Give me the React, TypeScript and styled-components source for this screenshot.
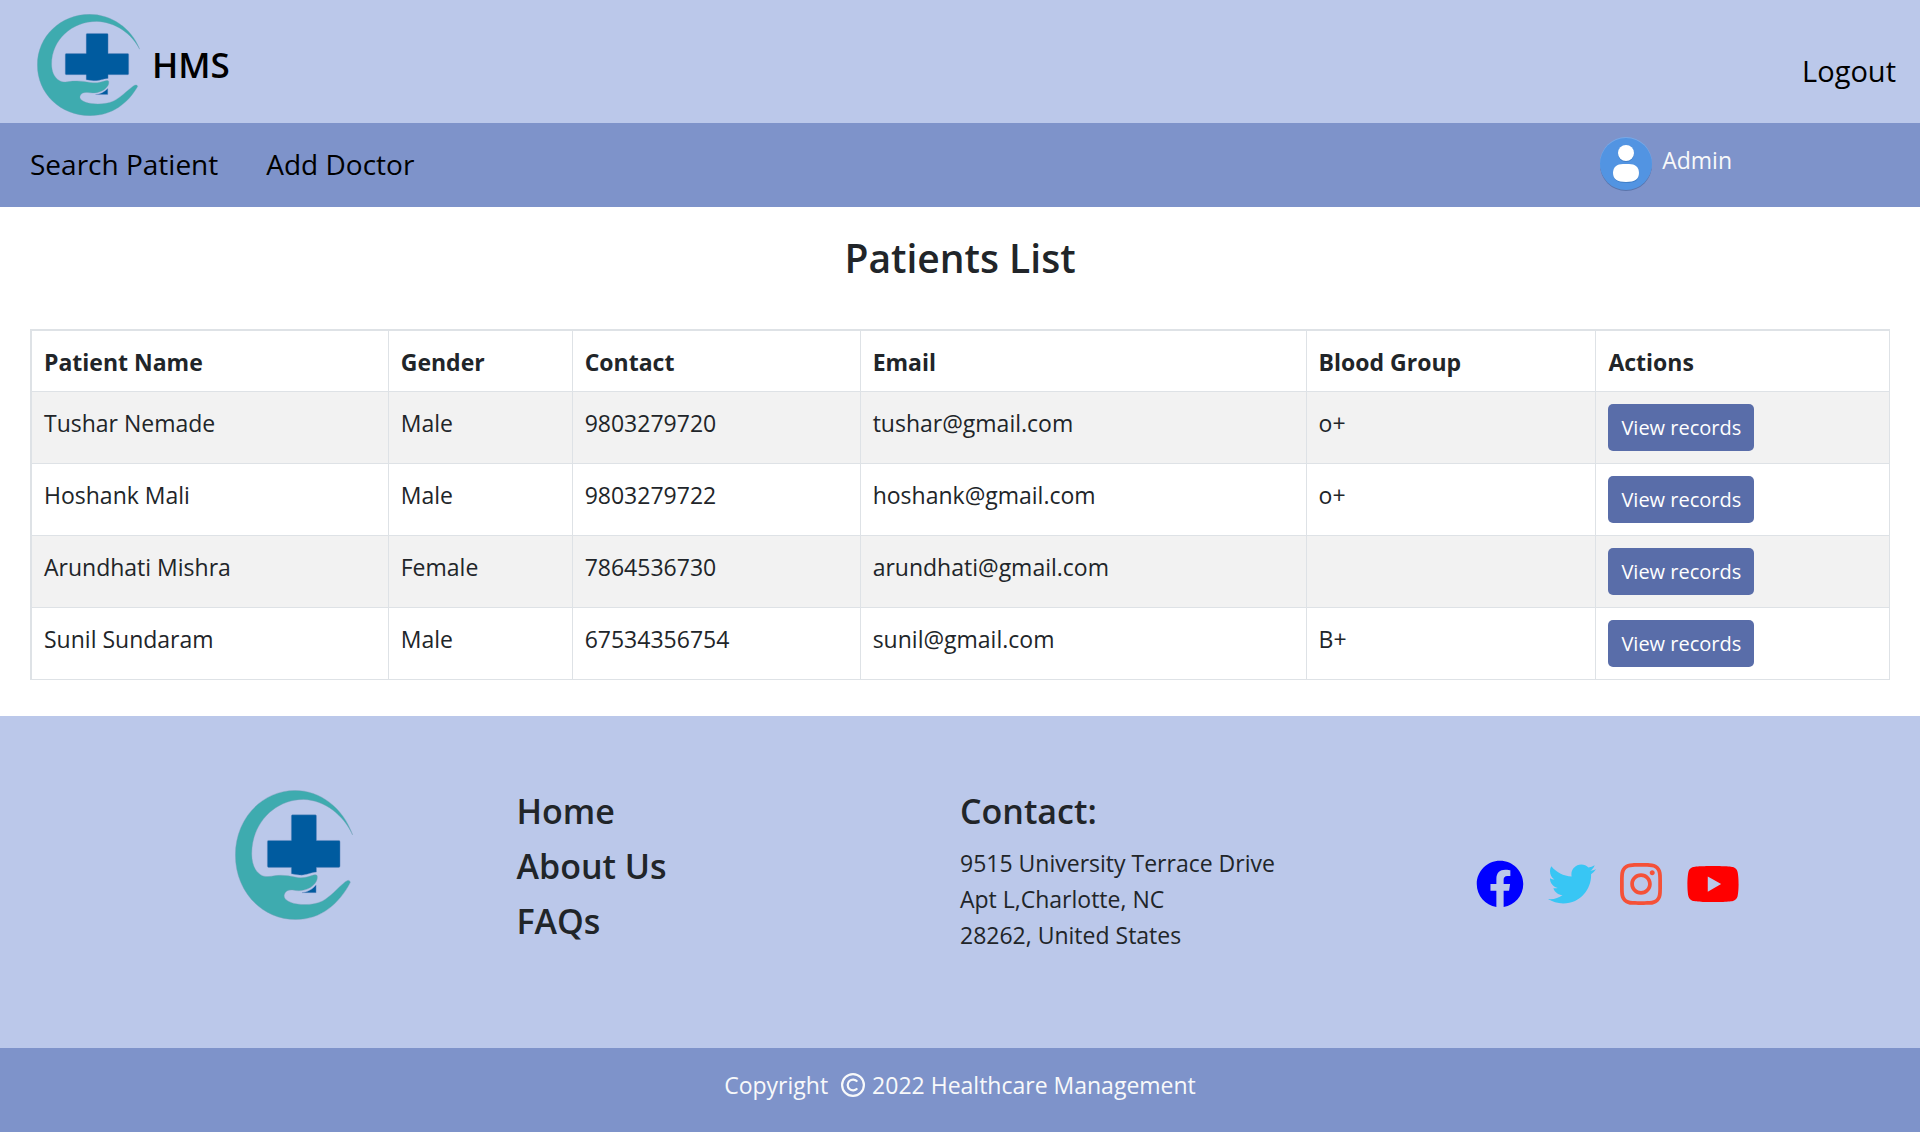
import React from "react";
import styled, { createGlobalStyle } from "styled-components";
import { FaFacebook, FaTwitter, FaInstagram, FaYoutube } from "react-icons/fa";

const GlobalStyle = createGlobalStyle`
  *, *::before, *::after { box-sizing: border-box; }
  body {
    margin: 0;
    background: #fff;
    color: #212529;
    font-family: "Segoe UI", "Open Sans", "Noto Sans", sans-serif;
    font-size: 23px;
    line-height: 36px;
  }
`;

const Header = styled.header`
  display: flex;
  justify-content: space-between;
  align-items: center;
  padding: 14px 24px 7px 37px;
  background: #bbc8ea;
`;

const Brand = styled.a`
  display: flex;
  align-items: center;
  gap: 12px;
  color: #000;
  font-size: 35px;
  font-weight: 600;
  text-decoration: none;
`;

const NavLink = styled.a`
  color: #000;
  font-size: 28px;
  line-height: 44px;
  text-decoration: none;
`;

const LogoutLink = styled(NavLink)`
  padding-top: 12px;
  font-size: 29px;
`;

const NavBar = styled.nav`
  display: flex;
  align-items: center;
  gap: 48px;
  height: 84px;
  padding: 0 188px 2px 30px;
  background: #7e93ca;
`;

const UserInfo = styled.div`
  display: flex;
  align-items: center;
  gap: 9px;
  margin-left: auto;
  color: #f8f9fa;
`;

const UserName = styled.span`
  padding-bottom: 8px;
`;

const Main = styled.main`
  padding: 24px 30px 36px;
`;

const Title = styled.h1`
  margin: 0 0 44px;
  font-size: 39px;
  line-height: 54px;
  font-weight: 600;
  text-align: center;
`;

const Table = styled.table`
  width: 100%;
  table-layout: fixed;
  border-spacing: 0;
  border-top: 2px solid #dee2e6;
  border-left: 2px solid #dee2e6;

  th,
  td {
    padding: 13px 12px 11px;
    border-right: 1px solid #dee2e6;
    border-bottom: 1px solid #dee2e6;
    text-align: left;
    vertical-align: top;
  }
  td:last-child { padding: 12px; }
  th { font-weight: 700; }
  tbody tr:nth-child(odd) { background: #f2f2f2; }
`;

const Col = styled.col<{ $width: string }>`
  width: ${(p) => p.$width};
`;

const RecordsButton = styled.button`
  display: block;
  height: 47px;
  padding: 0 13px;
  border: 0;
  border-radius: 5px;
  background: #596da9;
  color: #fff;
  font-family: inherit;
  font-size: 20px;
  white-space: nowrap;
  cursor: pointer;
`;

const Footer = styled.footer`
  background: #bbc8ea;
`;

const FooterGrid = styled.div`
  display: grid;
  grid-template-columns: repeat(4, 1fr);
  padding: 74px 73px 95px;
`;

const LogoCell = styled.div`
  display: flex;
  justify-content: center;
  padding-right: 2px;
`;

const LinkList = styled.ul`
  display: flex;
  flex-direction: column;
  gap: 12px;
  margin: 0;
  padding: 0;
  list-style: none;
`;

const FooterLink = styled.a`
  display: block;
  color: inherit;
  font-size: 34px;
  line-height: 43px;
  font-weight: 600;
  text-decoration: none;
`;

const ContactHeading = styled.h2`
  margin: 0 0 12px;
  font-size: 34px;
  line-height: 43px;
  font-weight: 600;
`;

const Address = styled.address`
  font-style: normal;
`;

const Socials = styled.div`
  display: flex;
  justify-content: center;
  align-items: center;
  gap: 24px;
  padding-right: 34px;
  padding-top: 24px;
`;

const SocialLink = styled.a<{ $color: string; $width: number }>`
  display: block;
  height: 48px;
  color: ${(p) => p.$color};

  svg {
    display: block;
    width: ${(p) => p.$width}px;
    height: 48px;
  }
`;

const CopyrightBar = styled.div`
  display: flex;
  justify-content: center;
  align-items: center;
  height: 84px;
  padding-bottom: 10px;
  background: #7e93ca;
  color: #f8f9fa;

  svg { margin: 0 7px 0 13px; }
`;

function Logo({ width, height }: { width: number; height: number }) {
  return (
    <svg width={width} height={height} viewBox="110 41 310 304" preserveAspectRatio="none" aria-hidden="true">
      <path
        d="M261 99H321Q324 99 324 102V159H383Q386 159 386 162V219Q386 222 383 222H324V233C306 234 298 241 280 240Q268 239 258 237V222H198Q195 222 195 219V162Q195 159 198 159H258V102Q258 99 261 99Z M286 281C300 280 314 273 323 263V281Z"
        fill="#005b9f"
        stroke="#6f8fc4"
        strokeWidth="1"
      />
      <path
        d="M419 146C394 82 333 42 268 42C181 42 111 108 111 193C111 278 180 344 270 344C336 344 384 307 413 257C411 250 405 252 399 256C379 271 360 291 339 301C316 311 278 311 257 304C242 299 237 292 240 285C243 276 252 274 262 275C274 277 289 278 304 271C317 265 328 254 326 242C325 239 321 239 316 240C299 245 287 248 271 245C253 242 236 239 217 241C203 243 189 246 177 239C161 230 154 211 154 190C154 118 215 63 290 63C346 65 395 99 419 146Z"
        fill="#3eabaf"
        stroke="#7aa0b8"
        strokeWidth="1"
      />
    </svg>
  );
}

function Avatar() {
  return (
    <svg width="54" height="56" viewBox="0 0 54 56" aria-hidden="true">
      <circle cx="27" cy="29" r="26" fill="#5a74ab" />
      <circle cx="27" cy="27" r="26" fill="#77a9e8" />
      <circle cx="27" cy="28" r="26" fill="#5294e2" />
      <g fill="#3f7fc9">
        <circle cx="27" cy="18" r="8" />
        <path d="M14 38C14 31 18 29 27 29S40 31 40 38S35 47 27 47S14 44 14 38Z" />
      </g>
      <g fill="#fff">
        <circle cx="27" cy="17" r="8" />
        <path d="M14 37C14 31 18 28 24 28H30C36 28 40 31 40 37C40 43 36 46 27 46S14 43 14 37Z" />
      </g>
    </svg>
  );
}

function CopyrightIcon() {
  return (
    <svg width="24" height="24" viewBox="0 0 24 24" fill="none" stroke="currentColor" aria-hidden="true">
      <circle cx="12" cy="12" r="10.9" strokeWidth="2.2" />
      <path d="M16.3 8.6A5.4 5.4 0 1 0 16.3 15.4" strokeWidth="2.2" />
    </svg>
  );
}

const columns = [
  { label: "Patient Name", width: "19.2%" },
  { label: "Gender", width: "9.9%" },
  { label: "Contact", width: "15.5%" },
  { label: "Email", width: "24%" },
  { label: "Blood Group", width: "15.6%" },
  { label: "Actions", width: "15.8%" },
];

const patients = [
  { name: "Tushar Nemade", gender: "Male", contact: "9803279720", email: "tushar@gmail.com", blood: "o+" },
  { name: "Hoshank Mali", gender: "Male", contact: "9803279722", email: "hoshank@gmail.com", blood: "o+" },
  { name: "Arundhati Mishra", gender: "Female", contact: "7864536730", email: "arundhati@gmail.com", blood: "" },
  { name: "Sunil Sundaram", gender: "Male", contact: "67534356754", email: "sunil@gmail.com", blood: "B+" },
];

const socials = [
  { label: "Facebook", color: "#0000ff", width: 48, Icon: FaFacebook },
  { label: "Twitter", color: "#38c6f4", width: 48, Icon: FaTwitter },
  { label: "Instagram", color: "#f55138", width: 42, Icon: FaInstagram },
  { label: "YouTube", color: "#ff0000", width: 54, Icon: FaYoutube },
];

export default function App() {
  return (
    <>
      <GlobalStyle />
      <Header>
        <Brand href="#">
          <Logo width={103} height={102} />
          HMS
        </Brand>
        <LogoutLink href="#">Logout</LogoutLink>
      </Header>
      <NavBar>
        <NavLink href="#">Search Patient</NavLink>
        <NavLink href="#">Add Doctor</NavLink>
        <UserInfo>
          <Avatar />
          <UserName>Admin</UserName>
        </UserInfo>
      </NavBar>
      <Main>
        <Title>Patients List</Title>
        <Table>
          <colgroup>
            {columns.map((c) => (
              <Col key={c.label} $width={c.width} />
            ))}
          </colgroup>
          <thead>
            <tr>
              {columns.map((c) => (
                <th key={c.label} scope="col">{c.label}</th>
              ))}
            </tr>
          </thead>
          <tbody>
            {patients.map((p) => (
              <tr key={p.contact}>
                <td>{p.name}</td>
                <td>{p.gender}</td>
                <td>{p.contact}</td>
                <td>{p.email}</td>
                <td>{p.blood}</td>
                <td>
                  <RecordsButton type="button">View records</RecordsButton>
                </td>
              </tr>
            ))}
          </tbody>
        </Table>
      </Main>
      <Footer>
        <FooterGrid>
          <LogoCell>
            <Logo width={118} height={130} />
          </LogoCell>
          <LinkList>
            {["Home", "About Us", "FAQs"].map((label) => (
              <li key={label}>
                <FooterLink href="#">{label}</FooterLink>
              </li>
            ))}
          </LinkList>
          <div>
            <ContactHeading>Contact:</ContactHeading>
            <Address>
              9515 University Terrace Drive
              <br />
              Apt L,Charlotte, NC
              <br />
              28262, United States
            </Address>
          </div>
          <Socials>
            {socials.map(({ label, color, width, Icon }) => (
              <SocialLink key={label} href="#" aria-label={label} $color={color} $width={width}>
                <Icon />
              </SocialLink>
            ))}
          </Socials>
        </FooterGrid>
        <CopyrightBar>
          Copyright
          <CopyrightIcon />
          2022 Healthcare Management
        </CopyrightBar>
      </Footer>
    </>
  );
}
